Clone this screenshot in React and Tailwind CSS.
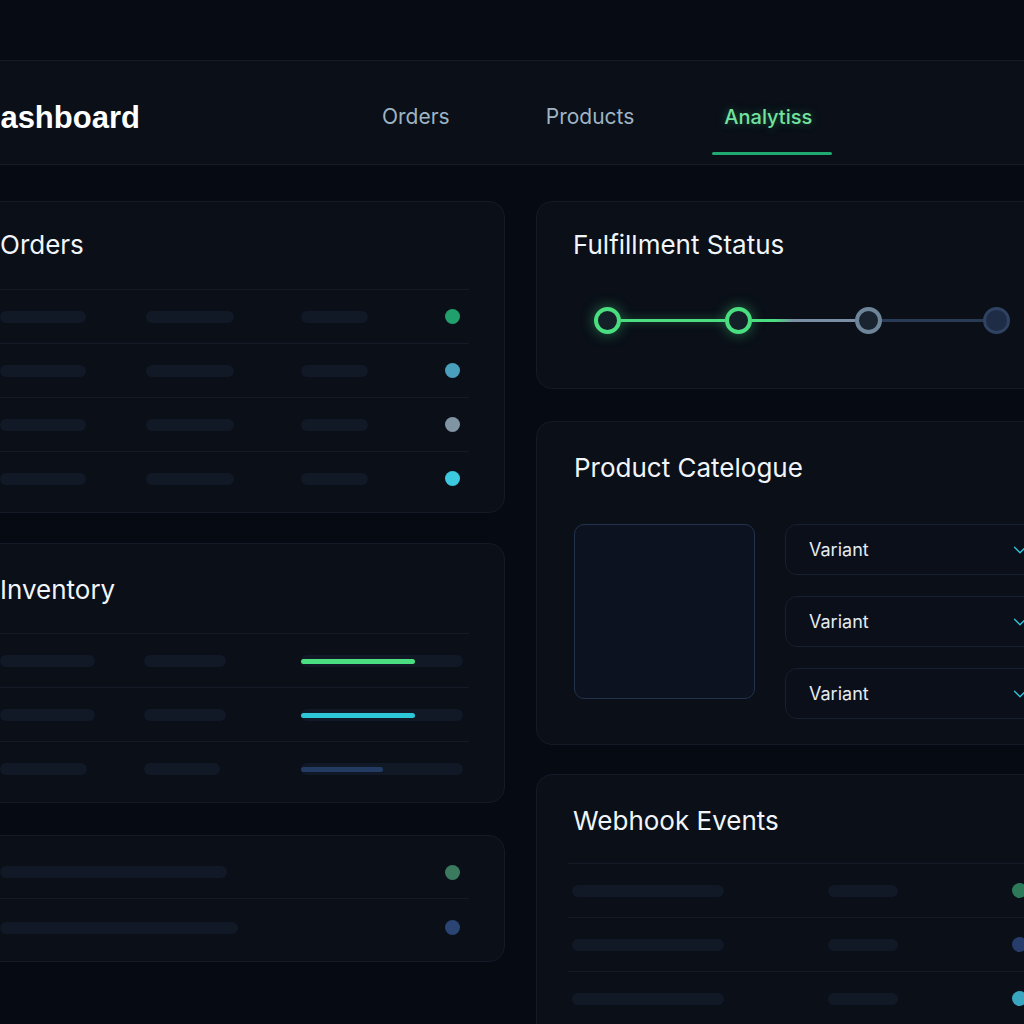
import { ChevronDown } from 'lucide-react';

// ── Placeholder table data ─────────────────────────────
const orderRows = [
  { dot: 'bg-[#21a06e]' },
  { dot: 'bg-[#4a9fbd]' },
  { dot: 'bg-[#8094a4]' },
  { dot: 'bg-[#3cc8de]' },
];

const inventoryRows = [
  { a: 'w-[95px]', b: 'w-[82px]', fill: 'w-[114px] bg-[#4ade80]' },
  { a: 'w-[95px]', b: 'w-[82px]', fill: 'w-[114px] bg-[#2cc7d8]' },
  { a: 'w-[87px]', b: 'w-[76px]', fill: 'w-[82px] bg-[#233a63]' },
];

const webhookRows = [
  { dot: 'bg-[#2d7a5b]' },
  { dot: 'bg-[#263d6b]' },
  { dot: 'bg-[#3aa5bf]' },
];

const Bar = ({ className = '' }) => (
  <div className={`h-[12px] rounded-full bg-[#121926] ${className}`} />
);

const Card = ({ className = '', children }) => (
  <section
    className={`rounded-[16px] border border-[#141b27] bg-[#0a0f18] ${className}`}
  >
    {children}
  </section>
);

const Title = ({ children }) => (
  <h2 className="text-[26px] leading-[30px] text-[#f1f5f9]">{children}</h2>
);

const Tab = ({ label, active, className = '' }) => (
  <div className={`relative flex items-center pt-[8px] ${className}`}>
    <span
      className={
        active
          ? 'text-[20px] font-medium text-[#72e29e] [text-shadow:0_0_10px_rgba(74,222,128,0.35)]'
          : 'text-[21px] text-[#9fb4c4]'
      }
    >
      {label}
    </span>
    {active && (
      <div className="absolute left-0 right-0 bottom-[9px] h-[3px] rounded-full bg-[#1fa971]" />
    )}
  </div>
);

const Variant = () => (
  <div className="h-[51px] flex items-center justify-between pl-[23px] pr-[8px] rounded-[12px] border border-[#182131] bg-[#0a0f19]">
    <span className="text-[18px] text-[#e5ebf2]">Variant</span>
    <ChevronDown className="w-[22px] h-[22px] text-[#2fc6df]" strokeWidth={1.4} />
  </div>
);

export default function App() {
  return (
    <div className="w-[1024px] h-[1024px] overflow-hidden bg-[#060a12] font-['Inter','Noto_Sans',sans-serif]">
      <div className="ml-[-39px] w-[1130px]">
        <div className="h-[60px] bg-[#070b14]" />

        {/* ── Top bar ───────────────────────────────────── */}
        <header className="h-[105px] flex border-y border-[#151c28] bg-[#0a0f18]">
          <div className="w-[409px] flex items-center pl-[17px] pt-[11px]">
            <h1 className="font-['Liberation_Sans',Arial,sans-serif] font-bold text-[31px] text-white">
              Dashboard
            </h1>
          </div>
          <nav className="flex">
            <Tab label="Orders" className="px-[12px]" />
            <Tab label="Products" className="px-[12px] ml-[72px]" />
            <Tab label="Analytiss" active className="pl-[12px] pr-[20px] ml-[66px]" />
          </nav>
        </header>

        {/* ── Content grid ─────────────────────────────── */}
        <main className="mt-[36px] grid grid-cols-[544px_543px] gap-x-[31px] items-start">
          {/* Left column */}
          <div className="flex flex-col">
            <Card className="h-[312px] pt-[28px] pl-[38px] pr-[35px]">
              <Title>Orders</Title>
              <div className="mt-[29px]">
                {orderRows.map((r, i) => (
                  <div key={i} className="h-[54px] flex items-center border-t border-[#141b27]">
                    <div className="w-[146px]"><Bar className="w-[86px]" /></div>
                    <div className="w-[155px]"><Bar className="w-[88px]" /></div>
                    <div className="w-[144px]"><Bar className="w-[67px]" /></div>
                    <div className={`w-[15px] h-[15px] rounded-full ${r.dot}`} />
                  </div>
                ))}
              </div>
            </Card>

            <Card className="mt-[30px] h-[260px] pt-[31px] pl-[38px] pr-[35px]">
              <Title>Inventory</Title>
              <div className="mt-[28px]">
                {inventoryRows.map((r, i) => (
                  <div key={i} className="h-[54px] flex items-center border-t border-[#141b27]">
                    <div className="w-[144px]"><Bar className={r.a} /></div>
                    <div className="w-[157px]"><Bar className={r.b} /></div>
                    <div className="relative w-[162px] h-[12px] rounded-full bg-[#121926]">
                      <div className={`absolute left-0 top-[4px] h-[5px] rounded-full ${r.fill}`} />
                    </div>
                  </div>
                ))}
              </div>
            </Card>

            <Card className="mt-[32px] h-[127px] pt-[10px] pl-[38px] pr-[35px]">
              <div className="h-[52px] flex items-center">
                <div className="w-[445px]"><Bar className="w-[227px]" /></div>
                <div className="w-[15px] h-[15px] rounded-full bg-[#3b7a5f]" />
              </div>
              <div className="h-[58px] flex items-center border-t border-[#141b27]">
                <div className="w-[445px]"><Bar className="w-[238px]" /></div>
                <div className="w-[15px] h-[15px] rounded-full bg-[#2a4473]" />
              </div>
            </Card>
          </div>

          {/* Right column */}
          <div className="flex flex-col">
            <Card className="h-[188px] pt-[28px] pl-[36px]">
              <Title>Fulfillment Status</Title>
              <div className="mt-[47px] ml-[21px] flex items-center">
                <div className="w-[27px] h-[27px] rounded-full border-[4px] border-[#4ade80] bg-[#142027] shadow-[0_0_14px_rgba(74,222,128,0.45)]" />
                <div className="w-[104px] h-[3px] bg-[#4ade80] shadow-[0_0_8px_rgba(74,222,128,0.4)]" />
                <div className="w-[27px] h-[27px] rounded-full border-[4px] border-[#4ade80] bg-[#142027] shadow-[0_0_14px_rgba(74,222,128,0.45)]" />
                <div className="w-[103px] h-[3px] bg-[linear-gradient(to_right,#4ade80_0%,#4ade80_22%,#7a8fa3_40%,#7a8fa3_100%)]" />
                <div className="w-[27px] h-[27px] rounded-full border-[4px] border-[#6e8599] bg-[#1a2431]" />
                <div className="w-[101px] h-[3px] bg-[#2a3b58]" />
                <div className="w-[27px] h-[27px] rounded-full border-[3px] border-[#2f4262] bg-[#1f2c45]" />
              </div>
            </Card>

            <Card className="mt-[32px] h-[324px] pt-[31px] pl-[37px] pr-[38px]">
              <Title>Product Catelogue</Title>
              <div className="mt-[41px] flex gap-[30px]">
                <div className="w-[181px] h-[175px] shrink-0 rounded-[10px] border border-[#22324d] bg-[#0c1220]" />
                <div className="flex-1 flex flex-col gap-[21px]">
                  <Variant />
                  <Variant />
                  <Variant />
                </div>
              </div>
            </Card>

            <Card className="mt-[29px] h-[300px] pt-[31px] pl-[36px] pr-[38px]">
              <Title>Webhook Events</Title>
              <div className="mt-[27px] ml-[-5px]">
                {webhookRows.map((r, i) => (
                  <div key={i} className="h-[54px] flex items-center border-t border-[#141b27]">
                    <div className="w-[260px] pl-[4px]"><Bar className="w-[152px]" /></div>
                    <div className="w-[184px]"><Bar className="w-[70px]" /></div>
                    <div className={`w-[15px] h-[15px] rounded-full ${r.dot}`} />
                  </div>
                ))}
              </div>
            </Card>
          </div>
        </main>
      </div>
    </div>
  );
}
